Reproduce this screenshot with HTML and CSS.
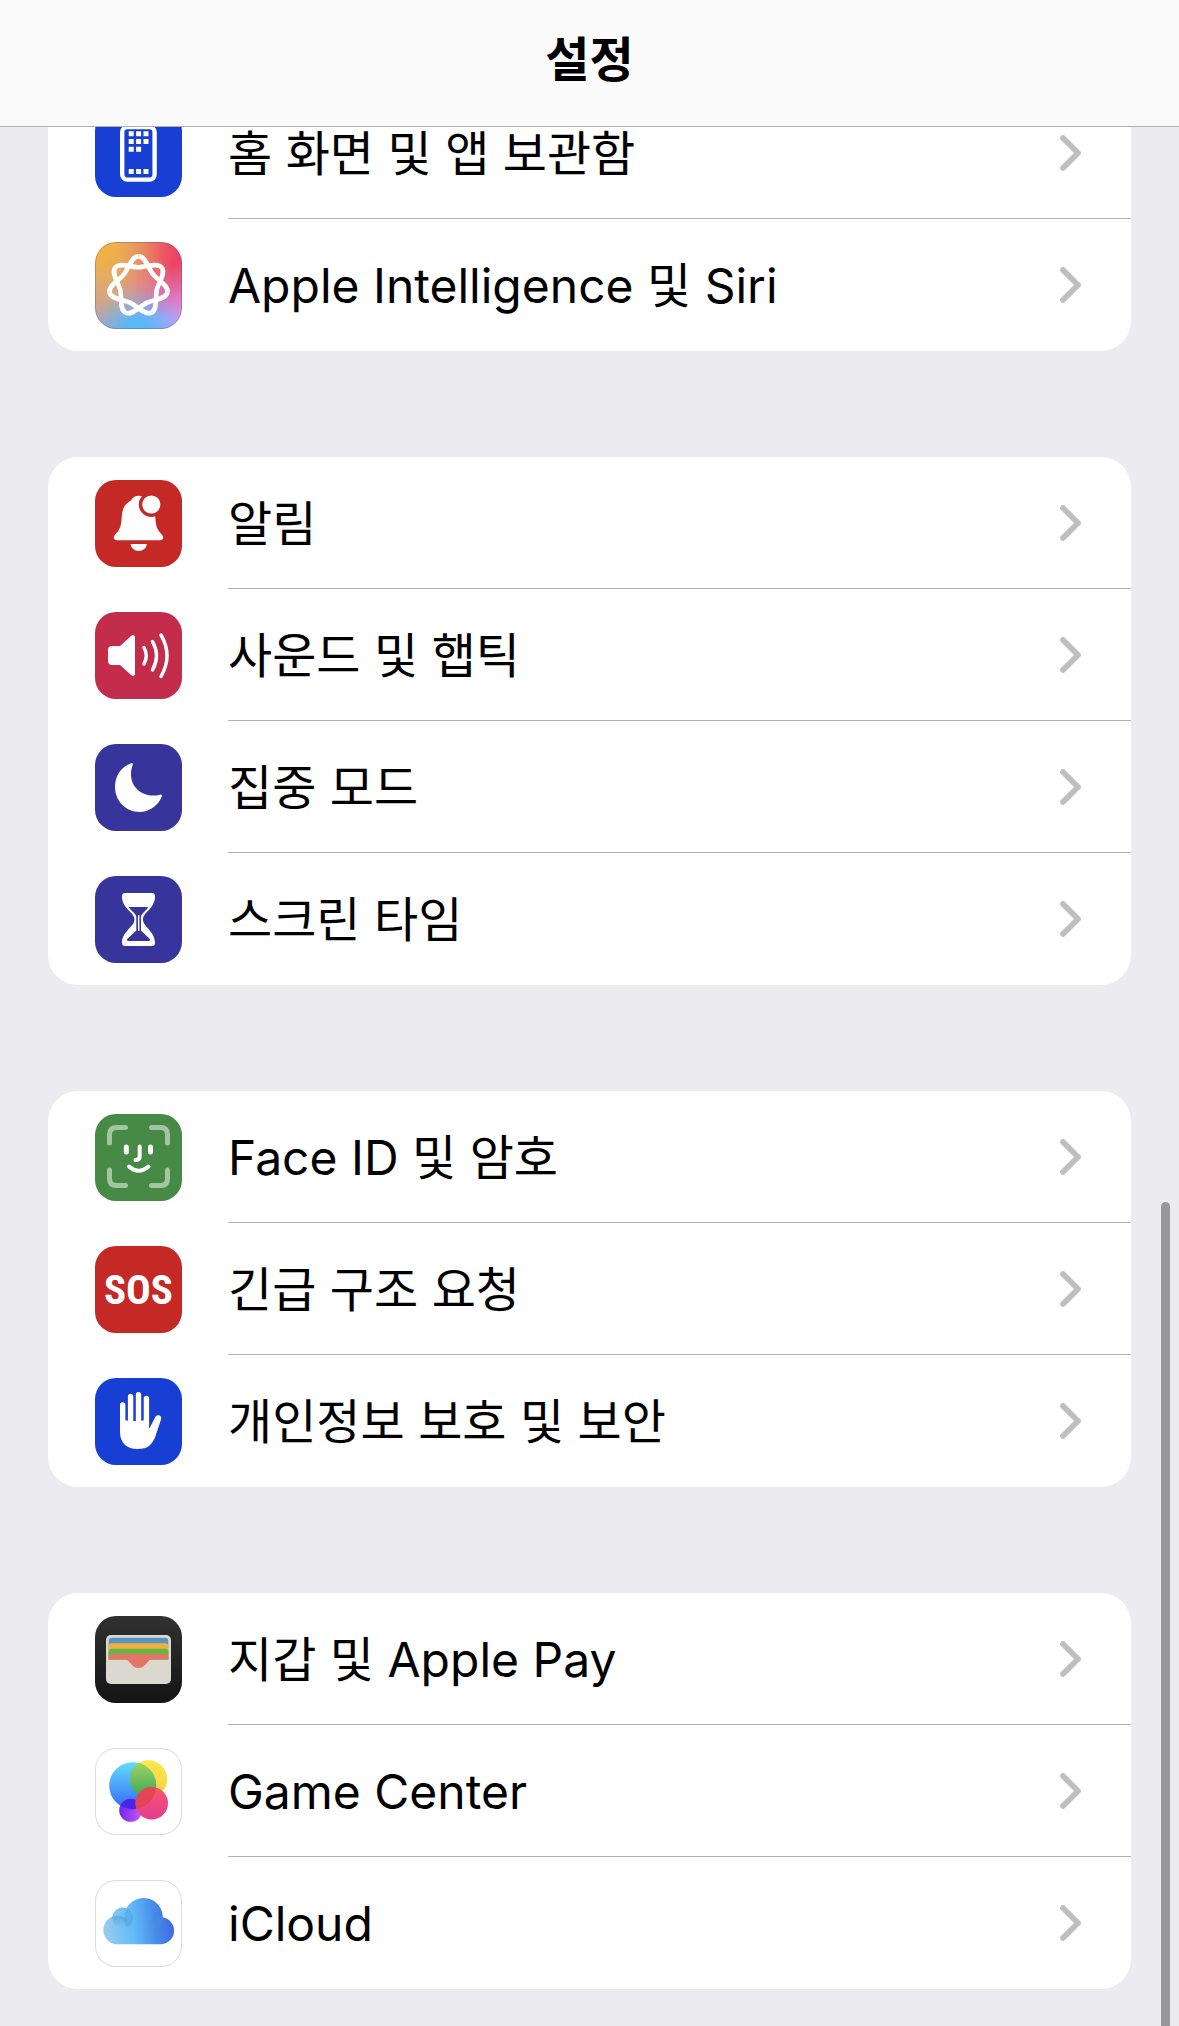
FILE: index.html
```html
<!DOCTYPE html>
<html lang="ko">
<head>
    <meta charset="UTF-8">
    <meta name="viewport" content="width=device-width, initial-scale=1.0">
    <title>설정</title>
    <link rel="stylesheet" href="styles.css">
</head>
<body>
    <svg class="defs" aria-hidden="true">
        <symbol id="chevron" viewBox="0 0 21 36">
            <path d="M3 3L18 18L3 33" fill="none" stroke="#bfbfc1" stroke-width="5.8" stroke-linecap="round" stroke-linejoin="round"/>
        </symbol>
    </svg>

    <header class="navbar">
        <h1>설정</h1>
    </header>

    <main class="settings">
        <ul class="group">
            <li><a class="row" href="#home">
                <span class="icon blue">
                    <svg viewBox="0 0 87 87">
                        <rect x="27.2" y="17" width="32.4" height="52.6" rx="5" fill="none" stroke="#fff" stroke-width="4.4"/>
                        <path fill="#fff" d="M33.7 21.3h5v5h-5zM41.1 21.3h5v5h-5zM48.5 21.3h5v5h-5zM33.7 29h5v5h-5zM41.1 29h5v5h-5zM48.5 29h5v5h-5zM33.7 36.7h5v5h-5zM41.1 36.7h5v5h-5zM33.7 59h5v5h-5zM41.1 59h5v5h-5zM48.5 59h5v5h-5z"/>
                    </svg>
                </span>
                <span class="content"><span class="label">홈 화면 및 앱 보관함</span><svg class="chevron"><use href="#chevron"/></svg></span>
            </a></li>
            <li><a class="row" href="#siri">
                <span class="icon siri">
                    <svg viewBox="0 0 87 87">
                        <g transform="translate(43.5 44)" fill="none" stroke="#fff" stroke-width="4.6">
                            <path id="loop" d="M0 -29.6C7.2 -29.6 9.6 -17.9 14.6 -11.7C19.6 -5.4 30.5 -.4 28.9 6.6"/>
                            <use href="#loop" transform="rotate(51.43)"/>
                            <use href="#loop" transform="rotate(102.86)"/>
                            <use href="#loop" transform="rotate(154.29)"/>
                            <use href="#loop" transform="rotate(205.71)"/>
                            <use href="#loop" transform="rotate(257.14)"/>
                            <use href="#loop" transform="rotate(308.57)"/>
                        </g>
                    </svg>
                </span>
                <span class="content"><span class="label">Apple Intelligence 및 Siri</span><svg class="chevron"><use href="#chevron"/></svg></span>
            </a></li>
        </ul>

        <ul class="group">
            <li><a class="row" href="#notifications">
                <span class="icon red">
                    <svg viewBox="0 0 87 87">
                        <path fill="#fff" d="M22.5 60.3c-4 0-4.8-3-2.5-5.5C24 50.5 26 47 26.5 40C27 30 28.5 24.5 36 20.5C37.5 17.5 40 15.7 43.5 15.7s5.5 1.8 6.5 4.8C58.5 24.5 60 30 60.5 40C61 47 63 50.5 67 54.8C69.3 57.3 68.5 60.3 64.5 60.3z"/>
                        <path fill="#fff" d="M35.7 64h16c0 4-4 7-8 7s-8-3-8-7z"/>
                        <circle cx="56.3" cy="24.5" r="10.8" fill="#fff" stroke="#c42926" stroke-width="3.4"/>
                    </svg>
                </span>
                <span class="content"><span class="label">알림</span><svg class="chevron"><use href="#chevron"/></svg></span>
            </a></li>
            <li><a class="row" href="#sounds">
                <span class="icon crimson">
                    <svg viewBox="0 0 87 87">
                        <path fill="#fff" d="M17 34h8L36 24c2-1.8 4-1 4 1.500v36c0 2.500-2 3.300-4 1.500L25 53h-8c-2.500 0-4-1.500-4-4V38c0-2.500 1.500-4 4-4z"/>
                        <path fill="none" stroke="#fff" stroke-width="3.5" stroke-linecap="round" d="M49 35.5q4.500 8 0 16.500M57.500 29.500q8 14 0 28.500M66 23q12 20.500 0 41.500"/>
                    </svg>
                </span>
                <span class="content"><span class="label">사운드 및 햅틱</span><svg class="chevron"><use href="#chevron"/></svg></span>
            </a></li>
            <li><a class="row" href="#focus">
                <span class="icon indigo">
                    <svg viewBox="0 0 87 87">
                        <path fill="#fff" d="M36.5 19C25.5 23 20 32.5 20 43c0 14 11 25 24.500 25C54 68 63 62 66.800 52.500c.5-1.300-.6-2.200-1.800-1.800C51 54.500 36 46 36 30c0-4 .8-6.500 1.700-9.300c.3-1.200-.2-2-1.200-1.700z"/>
                    </svg>
                </span>
                <span class="content"><span class="label">집중 모드</span><svg class="chevron"><use href="#chevron"/></svg></span>
            </a></li>
            <li><a class="row" href="#screentime">
                <span class="icon indigo">
                    <svg viewBox="0 0 87 87">
                        <path fill="#fff" d="M30 17h27c2 0 3 1 3 3.500C60 33 48 36 48 43.500S60 55 60 67c0 2-1 3-3 3H30c-2 0-3-1-3-3C27 55 39.500 51 39.500 43.500S27 33 27 20.500C27 18 28 17 30 17z"/>
                        <path fill="#37349b" d="M34.500 31h18c.5 0 .5.500.2 1C50.500 35 46 38 46 41v13.500l8.500 8.300c1 1.200.7 2.200-1 2.200h-20c-1.700 0-2-1-1-2.200l8.800-8.300V41c0-3-4.800-6-7-9c-.3-.5-.3-1 .2-1z"/>
                        <path stroke="#fff" stroke-width="1.5" d="M43.7 39v16"/>
                    </svg>
                </span>
                <span class="content"><span class="label">스크린 타임</span><svg class="chevron"><use href="#chevron"/></svg></span>
            </a></li>
        </ul>

        <ul class="group">
            <li><a class="row" href="#faceid">
                <span class="icon green">
                    <svg viewBox="0 0 87 87" fill="none" stroke="#fff" stroke-linecap="round">
                        <path stroke-width="5" stroke-opacity=".5" d="M14.5 29V20.5q0-7 7-7H30.5M56.5 13.5H65.5q7 0 7 7V29M72.5 56v8.5q0 7-7 7H56.5M30.5 71.5H21.5q-7 0-7-7V56"/>
                        <path stroke-width="5" d="M31.3 33v5M55.5 33v5"/>
                        <path stroke-width="4" d="M44.7 32.5V42q0 4-4.2 4M34 52.5q9.5 8.5 19.5 0"/>
                    </svg>
                </span>
                <span class="content"><span class="label">Face ID 및 암호</span><svg class="chevron"><use href="#chevron"/></svg></span>
            </a></li>
            <li><a class="row" href="#sos">
                <span class="icon red sos">SOS</span>
                <span class="content"><span class="label">긴급 구조 요청</span><svg class="chevron"><use href="#chevron"/></svg></span>
            </a></li>
            <li><a class="row" href="#privacy">
                <span class="icon blue">
                    <svg viewBox="0 0 87 87">
                        <path fill="none" stroke="#fff" stroke-width="5.4" stroke-linecap="round" d="M27.7 27v20M35.6 18.5v30M43.5 16.8v30M51.4 20.5v30"/>
                        <path fill="#fff" d="M25 43l3-1 7 1h9l7-1 3 1v7h.7L60 39.5c2-4 7.5-2 6 2L60.5 58C57.5 66.5 53 71 42.5 71S25 65 25 54z"/>
                    </svg>
                </span>
                <span class="content"><span class="label">개인정보 보호 및 보안</span><svg class="chevron"><use href="#chevron"/></svg></span>
            </a></li>
        </ul>

        <ul class="group">
            <li><a class="row" href="#wallet">
                <span class="icon black">
                    <svg viewBox="0 0 87 87">
                        <rect x="11" y="19" width="65" height="49" rx="5" fill="#dad8cf"/>
                        <path fill="#5695c1" d="M13.7 43.5V25q0-3.3 3.3-3.3h53q3.3 0 3.3 3.3v18.5z"/>
                        <path fill="#efb040" d="M13.7 43.5V30.5q0-3.3 3.3-3.3h53q3.3 0 3.3 3.3v13z"/>
                        <path fill="#69b445" d="M13.7 43.5V36q0-3.3 3.3-3.3h53q3.3 0 3.3 3.3v7.5z"/>
                        <path fill="#e27567" d="M13.7 43.5V41q0-3 3.3-3h53q3.3 0 3.3 3v2.5H57c-5 0-6 8.500-13.500 8.500S35 43.500 30 43.500z"/>
                    </svg>
                </span>
                <span class="content"><span class="label">지갑 및 Apple Pay</span><svg class="chevron"><use href="#chevron"/></svg></span>
            </a></li>
            <li><a class="row" href="#gamecenter">
                <span class="icon white">
                    <svg viewBox="0 0 87 87">
                        <defs>
                            <linearGradient id="gcBlue" x2="0" y2="1"><stop offset="0" stop-color="#62defa"/><stop offset="1" stop-color="#3667fb"/></linearGradient>
                            <linearGradient id="gcYellow" x2="0" y2="1"><stop offset="0" stop-color="#fbe94a"/><stop offset="1" stop-color="#f8cc45"/></linearGradient>
                            <linearGradient id="gcGreen" x2="0" y2="1"><stop offset="0" stop-color="#a4d860"/><stop offset="1" stop-color="#3da55a"/></linearGradient>
                            <linearGradient id="gcPurple"><stop offset="0" stop-color="#7026ee"/><stop offset="1" stop-color="#cc58ee"/></linearGradient>
                            <linearGradient id="gcPink" x2="0" y2="1"><stop offset="0" stop-color="#f4566c"/><stop offset="1" stop-color="#e63b92"/></linearGradient>
                            <clipPath id="gcClip"><circle cx="37.7" cy="37.7" r="23.5"/></clipPath>
                        </defs>
                        <circle cx="35.7" cy="62.3" r="11.5" fill="url(#gcPurple)"/>
                        <circle cx="53.5" cy="31" r="18.7" fill="url(#gcYellow)"/>
                        <circle cx="37.7" cy="37.7" r="23.5" fill="url(#gcBlue)"/>
                        <g clip-path="url(#gcClip)">
                            <circle cx="53.5" cy="31" r="18.7" fill="url(#gcGreen)"/>
                            <circle cx="35.7" cy="62.3" r="11.5" fill="#4a25e6"/>
                        </g>
                        <circle cx="56.7" cy="55.3" r="16.3" fill="url(#gcPink)"/>
                        <circle cx="56.7" cy="55.3" r="16.3" fill="#d8413c" fill-opacity=".6" clip-path="url(#gcClip)"/>
                    </svg>
                </span>
                <span class="content"><span class="label">Game Center</span><svg class="chevron"><use href="#chevron"/></svg></span>
            </a></li>
            <li><a class="row" href="#icloud">
                <span class="icon white">
                    <svg viewBox="0 0 87 87">
                        <defs>
                            <linearGradient id="icSky" gradientUnits="userSpaceOnUse" x1="8" y1="52" x2="79" y2="44"><stop offset="0" stop-color="#9ccdea"/><stop offset=".42" stop-color="#63bbf8"/><stop offset=".75" stop-color="#468ae8"/><stop offset="1" stop-color="#4268e6"/></linearGradient>
                            <linearGradient id="icShade" x2="0" y2="1"><stop offset="0" stop-color="#3d93cf" stop-opacity=".5"/><stop offset=".4" stop-color="#3d93cf" stop-opacity="0"/></linearGradient>
                            <clipPath id="icSmall"><circle cx="27.7" cy="38" r="10.5"/></clipPath>
                            <clipPath id="icBig"><circle cx="48.5" cy="37.700" r="19.3"/></clipPath>
                        </defs>
                        <path fill="url(#icSky)" d="M22.3 64.3A14.3 14.3 0 0 1 17.3 36.7A10.5 10.5 0 0 1 31.5 28.2A19.3 19.3 0 0 1 67.8 37.300A13.6 13.6 0 0 1 65.3 64.3z"/>
                        <g clip-path="url(#icSmall)">
                            <circle cx="22.3" cy="50" r="14.3" fill="url(#icShade)"/>
                            <circle cx="48.5" cy="37.7" r="19.3" fill="#3d93cf" fill-opacity=".3"/>
                        </g>
                        <circle cx="65.3" cy="50.7" r="13.6" fill="url(#icShade)" clip-path="url(#icBig)"/>
                    </svg>
                </span>
                <span class="content"><span class="label">iCloud</span><svg class="chevron"><use href="#chevron"/></svg></span>
            </a></li>
        </ul>
    </main>

    <div class="scroll-thumb"></div>
</body>
</html>
```
FILE: styles.css
```css
* { box-sizing: border-box; }
body { margin: 0; background: #ebebf0; color: #000; font-family: Inter, "Noto Sans CJK KR", sans-serif; }
.defs { position: absolute; width: 0; height: 0; }

.navbar { position: fixed; top: 0; left: 0; right: 0; z-index: 2; padding: 24px 0 30px; background: #fafafa; border-bottom: 1px solid #b2b2b5; text-align: center; }
.navbar h1 { margin: 0; font-size: 48px; line-height: 72px; font-weight: 700; }

.settings { display: flex; flex-direction: column; gap: 106px; padding: 87px 48px 37px; }
.group { margin: 0; padding: 0; list-style: none; background: #fff; border-radius: 30px; overflow: hidden; }
.row { display: flex; align-items: center; gap: 46px; min-height: 132px; padding-left: 47px; color: inherit; text-decoration: none; }
.content { flex: 1; align-self: stretch; display: flex; align-items: center; justify-content: space-between; padding-right: 50px; border-bottom: 1px solid #b4b4b7; }
.group li:last-child .content { border-bottom: none; }
.label { padding-top: 2px; font-size: 48px; line-height: 72px; }
.chevron { width: 21px; height: 36px; }

.icon { flex: none; width: 87px; height: 87px; border-radius: 21px; overflow: hidden; }
.icon svg { display: block; width: 100%; height: 100%; }
.blue { background: #173fd3; }
.red { background: #c42926; }
.crimson { background: #c32d4b; }
.indigo { background: #37349b; }
.green { background: #468a45; }
.black { background: linear-gradient(#313131, #141414); }
.white { background: #fff; box-shadow: inset 0 0 0 1px #dcdcde; }
.siri {
    background:
        radial-gradient(circle at 5% 5%, #f0b048 12%, transparent 65%),
        radial-gradient(circle at 90% 10%, #ec4467 12%, transparent 62%),
        radial-gradient(circle at 50% 105%, #58b8f8 12%, transparent 50%),
        radial-gradient(circle at 100% 78%, #d898f8 15%, transparent 60%),
        #c4a0a8;
    box-shadow: inset 0 0 0 1px rgba(90, 70, 90, 0.3);
}
.sos { color: #fff; font-family: "Liberation Sans Narrow", "Roboto Condensed", "Open Sans Condensed", Roboto, sans-serif; font-size: 41px; line-height: 88px; font-weight: 700; text-align: center; }

.scroll-thumb { position: fixed; top: 1202px; right: 9px; bottom: 0; z-index: 1; width: 9px; border-radius: 5px 5px 0 0; background: #98979c; }
```
